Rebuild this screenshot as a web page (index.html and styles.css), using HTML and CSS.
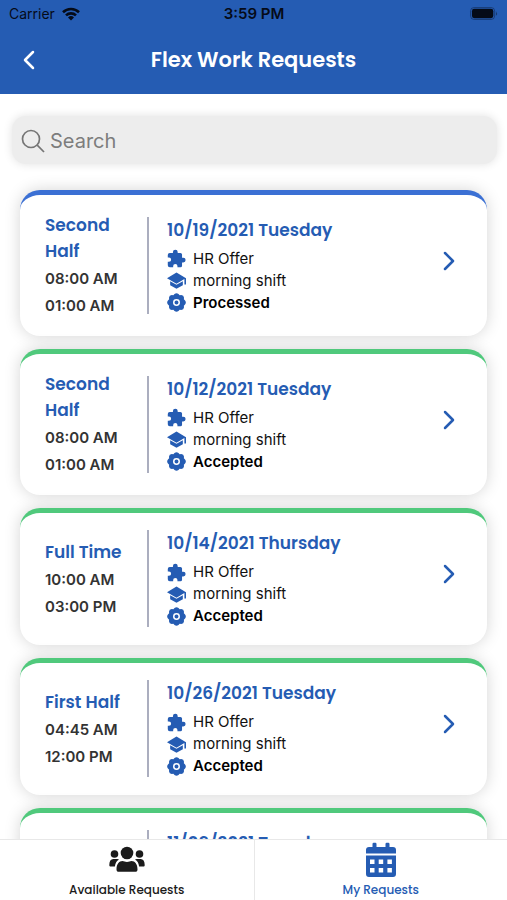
FILE: index.html
```html
<!DOCTYPE html>
<html lang="en">
<head>
<meta charset="utf-8">
<meta name="viewport" content="width=device-width, initial-scale=1">
<title>Flex Work Requests</title>
<link rel="stylesheet" href="styles.css">
</head>
<body>
<svg class="sprite" aria-hidden="true">
  <symbol id="puzzle" viewBox="0 0 24 24"><path d="M20.500 11H19V7a2 2 0 0 0-2-2h-3.500V3.800a3 3 0 0 0-6 0V5H3.500A2.500 2.500 0 0 0 1 7.500v3.300h1.500a2.700 2.700 0 0 1 0 5.400H1v4.300A2.500 2.500 0 0 0 3.500 23h4.300v-1.500a2.700 2.700 0 0 1 5.400 0V23H17a2 2 0 0 0 2-2v-4h1.500a3 3 0 0 0 0-6z"/></symbol>
  <symbol id="cap" viewBox="0 0 24 24"><path d="M12 2 0 9l12 7 10-5.800V17H24V9zM4 13v5L12 22.500l8-4.500v-5L12 17.500z"/></symbol>
  <symbol id="gear" viewBox="0 0 24 24"><path fill-rule="evenodd" d="M9.500 1.200Q12-.8 14.500 1.200L16 2.700 18 2.500Q21.200 2.800 21.500 6L21.300 8 22.800 9.500Q24.800 12 22.800 14.500L21.300 16 21.500 18Q21.200 21.200 18 21.500L16 21.300 14.500 22.800Q12 24.800 9.500 22.800L8 21.300 6 21.500Q2.800 21.200 2.500 18L2.700 16 1.200 14.500Q-.8 12 1.200 9.500L2.700 8 2.500 6Q2.800 2.800 6 2.500L8 2.700zM12 7.600a4.400 4.400 0 1 0 0 8.800 4.400 4.400 0 0 0 0-8.800zm0 1.900a2.500 2.500 0 1 1 0 5 2.500 2.500 0 0 1 0-5z"/></symbol>
  <symbol id="chevron" viewBox="0 0 12 20"><path d="M2 2l8 8-8 8" fill="none" stroke="currentColor" stroke-width="2.500" stroke-linecap="round" stroke-linejoin="round"/></symbol>
</svg>

<header class="header">
  <div class="status">
    <div class="carrier">Carrier
      <svg class="wifi" viewBox="0 0 18 14"><g fill="none" stroke="currentColor" stroke-width="2.600"><path d="M1 5.200a11.500 11.500 0 0 1 16 0"/><path d="M4 8.400a7.200 7.200 0 0 1 10 0"/></g><path d="M9 13.500 6 10.500a4.300 4.300 0 0 1 6 0z"/></svg>
    </div>
    <time class="clock">3:59 PM</time>
    <svg class="battery" viewBox="0 0 30 14"><rect x=".5" y=".5" width="26" height="13" rx="4" fill="none" stroke="currentColor" opacity=".4"/><rect x="2" y="2" width="23" height="10" rx="2.500"/><path d="M28 4.500q2 2.500 0 5z" opacity=".5"/></svg>
  </div>
  <div class="titlebar">
    <button class="back" type="button" aria-label="Back"><svg viewBox="0 0 12 20"><path d="M10 2l-8 8 8 8" fill="none" stroke="currentColor" stroke-width="2.500" stroke-linecap="round" stroke-linejoin="round"/></svg></button>
    <h1 class="title">Flex Work Requests</h1>
  </div>
</header>

<main class="content">
  <label class="search">
    <svg viewBox="0 0 24 24"><g fill="none" stroke="currentColor" stroke-width="1.700"><circle cx="10" cy="10" r="8.500"/><path d="M16.200 16.200l6.800 6.800"/></g></svg>
    <input type="search" placeholder="Search" aria-label="Search">
  </label>

  <ul class="list">
    <li class="card processed">
      <div class="shift"><h2>Second Half</h2><p>08:00 AM</p><p>01:00 AM</p></div>
      <div class="details">
        <h3>10/19/2021 Tuesday</h3>
        <p><svg><use href="#puzzle"/></svg>HR Offer</p>
        <p><svg><use href="#cap"/></svg>morning shift</p>
        <p class="state"><svg><use href="#gear"/></svg>Processed</p>
      </div>
      <button class="open" type="button" aria-label="Open request"><svg><use href="#chevron"/></svg></button>
    </li>
    <li class="card">
      <div class="shift"><h2>Second Half</h2><p>08:00 AM</p><p>01:00 AM</p></div>
      <div class="details">
        <h3>10/12/2021 Tuesday</h3>
        <p><svg><use href="#puzzle"/></svg>HR Offer</p>
        <p><svg><use href="#cap"/></svg>morning shift</p>
        <p class="state"><svg><use href="#gear"/></svg>Accepted</p>
      </div>
      <button class="open" type="button" aria-label="Open request"><svg><use href="#chevron"/></svg></button>
    </li>
    <li class="card">
      <div class="shift"><h2>Full Time</h2><p>10:00 AM</p><p>03:00 PM</p></div>
      <div class="details">
        <h3>10/14/2021 Thursday</h3>
        <p><svg><use href="#puzzle"/></svg>HR Offer</p>
        <p><svg><use href="#cap"/></svg>morning shift</p>
        <p class="state"><svg><use href="#gear"/></svg>Accepted</p>
      </div>
      <button class="open" type="button" aria-label="Open request"><svg><use href="#chevron"/></svg></button>
    </li>
    <li class="card">
      <div class="shift"><h2>First Half</h2><p>04:45 AM</p><p>12:00 PM</p></div>
      <div class="details">
        <h3>10/26/2021 Tuesday</h3>
        <p><svg><use href="#puzzle"/></svg>HR Offer</p>
        <p><svg><use href="#cap"/></svg>morning shift</p>
        <p class="state"><svg><use href="#gear"/></svg>Accepted</p>
      </div>
      <button class="open" type="button" aria-label="Open request"><svg><use href="#chevron"/></svg></button>
    </li>
    <li class="card">
      <div class="shift"></div>
      <div class="details">
        <h3>11/09/2021 Tuesday</h3>
      </div>
    </li>
  </ul>
</main>

<nav class="tabs">
  <a class="tab" href="#available">
    <svg viewBox="0 0 36 36"><circle cx="18" cy="11" r="6.300"/><circle cx="5.500" cy="12" r="3.800"/><circle cx="30.500" cy="12" r="3.800"/><path d="M7.500 27.500c0-5.500 2.500-8.500 6-8.500 1.500 0 2.500 1 4.500 1s3-1 4.500-1c3.500 0 6 3 6 8.500 0 1.500-.8 2.300-2.300 2.300H9.800c-1.500 0-2.300-.8-2.300-2.300zM.3 23c0-4 1.500-6 4-6h4q1 0 1.700.5c-2.500 1.400-3.700 3.700-4.100 7H1.800c-1 0-1.500-.5-1.500-1.500zM35.700 23c0-4-1.500-6-4-6h-4q-1 0-1.700.5c2.500 1.400 3.700 3.700 4.100 7h4.100c1 0 1.500-.5 1.500-1.500z"/></svg>
    Available Requests
  </a>
  <a class="tab active" href="#mine" aria-current="page">
    <svg viewBox="0 0 36 36"><path fill-rule="evenodd" d="M3 11.500V8q0-3 3-3h3.500V2q0-1.200 1.200-1.200h1.600q1.200 0 1.200 1.200v3h9V2q0-1.200 1.200-1.200h1.600q1.200 0 1.200 1.200v3H30q3 0 3 3v3.500zM3 13.500h30V32q0 3-3 3H6q-3 0-3-3zM7 17.500v4.500h4.500v-4.500zm8.700 0v4.500h4.500v-4.500zm8.700 0v4.500h4.500v-4.500zM7 26v4.500h4.500V26zm8.700 0v4.500h4.500V26zm8.700 0v4.500h4.500V26z"/></svg>
    My Requests
  </a>
</nav>
</body>
</html>
```
FILE: styles.css
```css
:root {
  --blue: #255cb3;
  --green: #50c97c;
  --heading: Poppins, Inter, sans-serif;
}

* { box-sizing: border-box; }

body {
  margin: 0;
  height: 100vh;
  display: flex;
  flex-direction: column;
  overflow: hidden;
  background: #fff;
  color: #111;
  font-family: Inter, sans-serif;
}

h1, h2, h3, p, ul { margin: 0; padding: 0; }
ul { list-style: none; }
svg { fill: currentColor; flex: none; }
button { border: 0; padding: 0; background: none; cursor: pointer; }
.sprite { position: absolute; width: 0; height: 0; }

.header {
  flex: none;
  background: var(--blue);
  color: #fff;
  padding-bottom: 10px;
}

.status {
  display: grid;
  grid-template-columns: 1fr auto 1fr;
  align-items: center;
  height: 27px;
  padding: 0 8px 0 9px;
  color: #050b18;
  font-size: 14px;
}
.carrier { display: flex; align-items: center; gap: 7px; }
.wifi { width: 18px; height: 14px; }
.clock { font-size: 15px; font-weight: 600; }
.battery { width: 30px; height: 13px; justify-self: end; }

.titlebar {
  display: grid;
  grid-template-columns: 58px 1fr 58px;
  align-items: center;
  height: 57px;
  padding-top: 8px;
}
.back { display: grid; place-items: center; height: 44px; color: #fff; }
.back svg { width: 12px; height: 20px; }
.title {
  text-align: center;
  font: 600 21px/32px var(--heading);
}

.content {
  flex: 1;
  min-height: 0;
  overflow-y: auto;
  scrollbar-width: none;
  padding: 22px 10px 20px 12px;
}

.search {
  display: flex;
  align-items: center;
  gap: 5px;
  height: 48px;
  padding: 2px 9px 0;
  border-radius: 14px;
  background: #ededed;
  box-shadow: 0 0 10px rgba(0, 0, 0, 0.12);
  color: #757575;
}
.search svg { width: 24px; height: 24px; }
.search input {
  flex: 1;
  min-width: 0;
  border: 0;
  padding: 0;
  outline: 0;
  background: none;
  font: 20px/28px Inter, sans-serif;
}
.search input::placeholder { color: #7d7d7d; opacity: 1; }

.list {
  display: flex;
  flex-direction: column;
  gap: 13px;
  padding: 26px 10px 0 8px;
}

.card {
  display: flex;
  align-items: center;
  padding: 17px 29px 18px 25px;
  border-top: 5px solid var(--green);
  border-radius: 20px;
  background: #fff;
  box-shadow: 0 0 16px rgba(0, 0, 0, 0.17);
}
.card.processed { border-top-color: #3b70d4; }

.shift { width: 102px; padding-right: 16px; }
.shift h2 {
  color: var(--blue);
  font: 600 17px/26px var(--heading);
}
.shift p {
  margin-top: 3px;
  color: #333;
  font-weight: 600;
  font-size: 15px;
  line-height: 24px;
}

.details {
  flex: 1;
  min-width: 0;
  min-height: 97px;
  padding-left: 18px;
  border-left: 2px solid #abaebf;
}
.details h3 {
  margin-bottom: 5px;
  color: var(--blue);
  font: 600 17px/26px var(--heading);
}
.details p {
  display: flex;
  align-items: center;
  gap: 7px;
  font-size: 15px;
  line-height: 22px;
}
.details svg { width: 19px; height: 19px; color: var(--blue); }
.details .state { color: #000; font-weight: 600; }

.open { color: var(--blue); padding: 0 3px; margin-bottom: 9px; }
.open svg { display: block; width: 12px; height: 20px; }

.tabs {
  flex: none;
  display: grid;
  grid-template-columns: 1fr 1fr;
  height: 61px;
  border-top: 1px solid #e8e8e8;
  background: #fff;
}
.tab {
  display: flex;
  flex-direction: column;
  align-items: center;
  gap: 2px;
  padding-top: 2px;
  color: #1b1b1b;
  text-decoration: none;
  font: 500 12px/20px var(--heading);
}
.tab + .tab { border-left: 1px solid #e8e8e8; }
.tab svg { width: 36px; height: 36px; }
.tab.active { color: var(--blue); }
```
